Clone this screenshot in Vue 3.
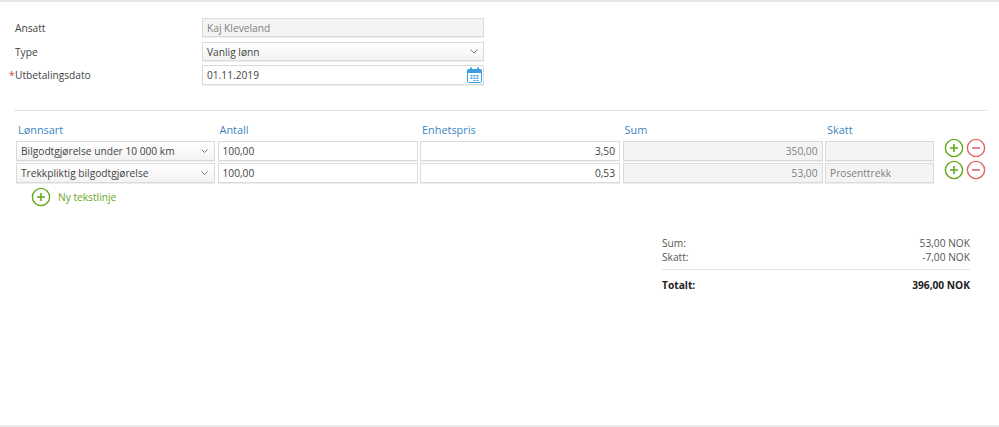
<script setup>
const rows = [
  { type: 'Bilgodtgjørelse under 10 000 km', qty: '100,00', price: '3,50', sum: '350,00', tax: '' },
  { type: 'Trekkpliktig bilgodtgjørelse', qty: '100,00', price: '0,53', sum: '53,00', tax: 'Prosenttrekk' },
]
</script>

<template>
  <div class="page">
    <section class="head">
      <div class="form-row first">
        <label class="lbl">Ansatt</label>
        <div class="box disabled wide">Kaj Kleveland</div>
      </div>
      <div class="form-row second">
        <label class="lbl">Type</label>
        <div class="box select wide">
          <span>Vanlig lønn</span>
          <svg class="chev" width="8" height="5" viewBox="0 0 8 5"><path d="M.5.5L4 4 7.5.5" fill="none" stroke="#777" stroke-width="1"/></svg>
        </div>
      </div>
      <div class="form-row date-row">
        <label class="lbl"><i class="req">*</i>Utbetalingsdato</label>
        <div class="box wide date">
          <span>01.11.2019</span>
          <svg class="cal" width="15" height="16" viewBox="0 0 15 16">
            <rect x="0.5" y="2.5" width="14" height="13" rx="1" fill="#fff" stroke="#3a9fe2"/>
            <rect x="0.5" y="2.5" width="14" height="3.5" fill="#3a9fe2"/>
            <rect x="3" y="0.5" width="2" height="3.5" fill="#3a9fe2"/>
            <rect x="10" y="0.5" width="2" height="3.5" fill="#3a9fe2"/>
            <path d="M3.5 8h2v1.5h-2zM6.5 8h2v1.5h-2zM9.5 8h2v1.5h-2zM3.5 10.5h2V12h-2zM6.5 10.5h2V12h-2zM9.5 10.5h2V12h-2zM6.5 13h2v1h-2zM9.5 13h2v1h-2z" fill="#3a9fe2"/>
          </svg>
        </div>
      </div>
    </section>

    <hr class="rule" />

    <section class="lines">
      <div class="grid titles">
        <span>Lønnsart</span><span>Antall</span><span>Enhetspris</span><span>Sum</span><span>Skatt</span>
      </div>
      <div v-for="r in rows" :key="r.type" class="line">
        <div class="grid">
          <div class="box select">
            <span>{{ r.type }}</span>
            <svg class="chev small" width="7" height="4" viewBox="0 0 7 4"><path d="M.5.5l3 3 3-3" fill="none" stroke="#777" stroke-width="1"/></svg>
          </div>
          <div class="box">{{ r.qty }}</div>
          <div class="box right">{{ r.price }}</div>
          <div class="box disabled right">{{ r.sum }}</div>
          <div class="box disabled">{{ r.tax }}</div>
        </div>
        <div class="actions">
          <svg class="ico" width="20" height="20" viewBox="0 0 20 20"><circle cx="10" cy="10" r="8.6" fill="none" stroke="#65a81a" stroke-width="1.4"/><path d="M10 6v8M6 10h8" stroke="#65a81a" stroke-width="1.6"/></svg>
          <svg class="ico" width="20" height="20" viewBox="0 0 20 20"><circle cx="10" cy="10" r="8.6" fill="none" stroke="#e06468" stroke-width="1.4"/><path d="M6 10h8" stroke="#e06468" stroke-width="1.6"/></svg>
        </div>
      </div>
      <div class="add">
        <svg width="20" height="20" viewBox="0 0 20 20"><circle cx="10" cy="10" r="8.6" fill="none" stroke="#65a81a" stroke-width="1.4"/><path d="M10 6v8M6 10h8" stroke="#65a81a" stroke-width="1.6"/></svg>
        <span>Ny tekstlinje</span>
      </div>
    </section>

    <section class="summary">
      <div class="sum-row"><span>Sum:</span><span>53,00 NOK</span></div>
      <div class="sum-row"><span>Skatt:</span><span>-7,00 NOK</span></div>
      <div class="sum-row total"><span>Totalt:</span><span>396,00 NOK</span></div>
    </section>
  </div>
</template>

<style>
html, body { margin: 0; background: #fff; }
</style>

<style scoped>
.page {
  box-sizing: border-box;
  height: 427px;
  overflow: hidden;
  border-top: 2px solid #e6e6e6;
  border-bottom: 2px solid #ececec;
  font-family: "Open Sans", sans-serif;
  font-size: 10.2px;
  line-height: 16px;
  color: #444;
  background: #fff;
}
.head {
  padding: 16px 0 0 15px;
  display: flex;
  flex-direction: column;
}
.form-row {
  display: flex;
  align-items: center;
  height: 20px;
}
.first, .second { height: 19px; }
.first .box, .second .box { height: 19px; }
.first { margin-bottom: 5px; }
.second { margin-bottom: 4px; }
.lbl {
  width: 187px;
  position: relative;
}
.req {
  position: absolute;
  left: -6px;
  top: 0;
  color: #d0454a;
  font-style: normal;
}
.box {
  box-sizing: border-box;
  height: 20px;
  min-width: 0;
  padding: 0 4px;
  display: flex;
  align-items: center;
  justify-content: space-between;
  border: 1px solid #dadada;
  box-shadow: 0 1px 0 #eee;
  background: #fff;
  white-space: nowrap;
  overflow: hidden;
}
.wide { width: 282px; }
.disabled {
  background: #f4f4f4;
  color: #808080;
}
.select {
  background: linear-gradient(#fff, #f3f3f3);
}
.right { justify-content: flex-end; }
.chev { flex: none; margin-right: 1px; }
.chev.small { margin-right: 2px; }
.date { padding-right: 0; }
.cal { flex: none; margin-right: 1px; }
.rule {
  margin: 25px 12px 0 14px;
  border: 0;
  border-top: 1px solid #e4e4e4;
}
.lines {
  padding: 10px 0 0 16px;
}
.grid {
  display: grid;
  grid-template-columns: 199px 200px 200px 200px 109px;
  column-gap: 2.5px;
  width: 918px;
}
.titles {
  height: 20px;
  padding-top: 1px;
  box-sizing: border-box;
  font-size: 10.9px;
  color: #3a85bf;
  align-items: start;
}
.titles span { padding-left: 2px; }
.line {
  display: flex;
  height: 22px;
}
.actions {
  display: flex;
  gap: 2px;
  margin-left: 10px;
  margin-top: -3px;
}
.ico { flex: none; }
.add {
  display: flex;
  align-items: center;
  gap: 7px;
  padding: 2px 0 0 15px;
  color: #6aa51e;
}
.summary {
  width: 308px;
  margin: 29px 0 0 662px;
}
.sum-row {
  display: flex;
  justify-content: space-between;
  height: 14px;
  line-height: 14px;
  color: #555;
}
.total {
  height: 24px;
  line-height: 18px;
  margin-top: 5px;
  padding-top: 6px;
  border-top: 1px solid #e4e4e4;
  font-weight: 700;
  color: #222;
}
</style>
